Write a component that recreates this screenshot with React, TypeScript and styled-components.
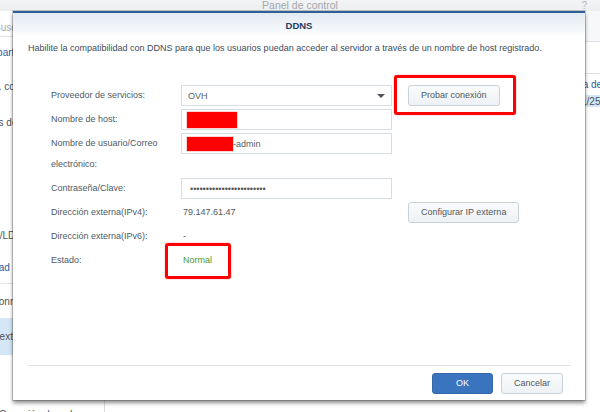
import React from "react";
import styled, { createGlobalStyle } from "styled-components";

const Global = createGlobalStyle`
  html, body { margin: 0; padding: 0; }
  body {
    width: 600px; height: 412px; overflow: hidden;
    font-family: "Liberation Sans", Arial, sans-serif;
    background: #fff;
  }
  #root { width: 600px; height: 412px; position: relative; overflow: hidden; }
  * { box-sizing: border-box; }
`;

/* ---------- background window ---------- */
const Window = styled.div`
  display: flex;
  flex-direction: column;
  width: 600px;
  height: 412px;
  background: #fff;
`;

const TitleBar = styled.div`
  flex: none;
  height: 11px;
  display: grid;
  grid-template-columns: 1fr auto 1fr;
  align-items: center;
  background: linear-gradient(#f3f4f5, #eceef0);
  color: #a3a7ab;
  font-size: 10.5px;
  line-height: 11px;
`;

const TitleText = styled.div`
  grid-column: 2;
  margin-top: -1px;
`;

const Help = styled.div`
  justify-self: end;
  padding-right: 13px;
  color: #b4b8bc;
  font-size: 10px;
`;

const WindowBody = styled.div`
  flex: 1;
  display: flex;
  min-height: 0;
`;

const Sidebar = styled.div`
  width: 105px;
  flex: none;
  border-right: 1px solid #d9dde1;
  display: flex;
  flex-direction: column;
  overflow: hidden;
`;

const SideItem = styled.div<{ $h: number; $color?: string; $indent: number; $active?: boolean; $line?: boolean }>`
  flex: none;
  height: ${(p) => p.$h}px;
  display: flex;
  align-items: center;
  white-space: nowrap;
  font-size: 10px;
  color: ${(p) => p.$color || "#4b535b"};
  background: ${(p) => (p.$active ? "#d5e7f7" : "transparent")};
  border-bottom: ${(p) => (p.$line ? "1px solid #e3e6e9" : "none")};
  & > span { margin-left: ${(p) => p.$indent}px; }
`;

const SearchBox = styled.div`
  flex: none;
  margin-top: 8px;
  height: 18px;
  border-bottom: 1px solid #e1e4e7;
  display: flex;
  align-items: center;
  color: #a5abb1;
  font-size: 10px;
  white-space: nowrap;
  & > span { margin-left: -6px; }
`;

const Main = styled.div`
  flex: 1;
  display: flex;
  flex-direction: column;
  overflow: hidden;
`;

const MainBar = styled.div<{ $h: number; $bg?: string; $line?: boolean; $color?: string }>`
  flex: none;
  height: ${(p) => p.$h}px;
  background: ${(p) => p.$bg || "#fff"};
  border-bottom: ${(p) => (p.$line ? "1px solid #dde1e5" : "none")};
  display: grid;
  grid-template-columns: 451px auto;
  align-items: center;
  white-space: nowrap;
  font-size: 10px;
  color: ${(p) => p.$color || "#4b535b"};
`;

/* ---------- dialog ---------- */
const Dialog = styled.div`
  position: absolute;
  left: 13px;
  top: 11px;
  width: 572px;
  height: 389px;
  background: #fff;
  border-top: 2px solid #2f5f96;
  box-shadow: 0 0 0 1px rgba(0, 0, 0, 0.18), 0 3px 4px rgba(0, 0, 0, 0.45);
  display: flex;
  flex-direction: column;
  font-size: 9px;
`;

const Header = styled.div`
  flex: none;
  height: 23px;
  background: linear-gradient(#e3eaf2, #f8fafc 85%, #fff);
  display: flex;
  align-items: center;
  justify-content: center;
`;

const Title = styled.div`
  font-weight: bold;
  font-size: 9.5px;
  color: #1d3b66;
  margin-top: 2px;
`;

const Body = styled.div`
  flex: 1;
  padding: 6px 15px 0;
  display: flex;
  flex-direction: column;
`;

const Description = styled.div`
  line-height: 12px;
  color: #3d4c5c;
`;

const Form = styled.div`
  margin-top: 31px;
  margin-left: 23px;
  display: grid;
  grid-template-columns: 114px 211px auto;
  column-gap: 16px;
  row-gap: 3px;
  grid-auto-rows: minmax(21px, auto);
  align-items: start;
`;

const Label = styled.div`
  line-height: 21px;
  color: #4e5a66;
`;

const Field = styled.div`
  height: 21px;
  border: 1px solid #d6dde5;
  padding: 0 5px;
  display: flex;
  align-items: center;
  color: #555d65;
  white-space: nowrap;
`;

const SelectField = styled(Field)`
  padding: 0 6px 0 6px;
  justify-content: space-between;
`;

const Caret = styled.span`
  width: 0;
  height: 0;
  border-left: 4px solid transparent;
  border-right: 4px solid transparent;
  border-top: 4px solid #4f565d;
`;

const Redacted = styled.span<{ $w: number; $h: number }>`
  display: inline-block;
  width: ${(p) => p.$w}px;
  height: ${(p) => p.$h}px;
  background: #ff0000;
  box-shadow: 0 0 1px #ff0000;
`;

const Dots = styled.span`
  font-size: 9px;
  color: #555;
  margin-left: 3px;
`;

const Value = styled.div<{ $color?: string }>`
  line-height: 21px;
  padding-left: 2px;
  color: ${(p) => p.$color || "#50575e"};
`;

const Cell = styled.div`
  justify-self: start;
`;

const Button = styled.button<{ $primary?: boolean }>`
  height: 21px;
  min-width: 61px;
  padding: 0 12px;
  border-radius: 3px;
  border: 1px solid ${(p) => (p.$primary ? "#3468ac" : "#c9d1da")};
  background: ${(p) => (p.$primary ? "#3a74bf" : "linear-gradient(#fafbfc, #eef1f5)")};
  color: ${(p) => (p.$primary ? "#fff" : "#50585f")};
  font-family: "Liberation Sans", Arial, sans-serif;
  font-size: 9px;
  line-height: 19px;
  cursor: pointer;
`;

const Annotated = styled.span`
  position: relative;
  display: inline-flex;
`;

const Mark = styled.span<{ $t: number; $l: number; $r: number; $b: number }>`
  position: absolute;
  top: ${(p) => p.$t}px;
  left: ${(p) => p.$l}px;
  right: ${(p) => p.$r}px;
  bottom: ${(p) => p.$b}px;
  border: 3px solid #ff0000;
  border-radius: 3px;
  box-shadow: 0 0 1px #ff0000;
  pointer-events: none;
`;

const Footer = styled.div`
  flex: none;
  margin: 0 14px 0 15px;
  border-top: 1px solid #dfe3e8;
  padding: 7px 8px 6px 0;
  display: flex;
  justify-content: flex-end;
  gap: 8px;
`;

const sideItems = [
  { text: "Compartir", h: 30, color: "#2b5e9c", indent: -24 },
  { text: "Carp. compartida", h: 38, indent: -23 },
  { text: "Servicios de archivos", h: 34, indent: -37 },
  { text: "", h: 80, indent: 0 },
  { text: "Dominio/LDAP", h: 32, indent: -37 },
  { text: "Conectividad", h: 33, color: "#2b5e9c", indent: -48, line: true },
  { text: "QuickConnect", h: 34, indent: -34 },
  { text: "Acceso externo", h: 37, indent: -36, active: true },
  { text: "", h: 47, indent: 0 },
  { text: "Conexión de red", h: 24, indent: -1 },
];

export default function App() {
  return (
    <>
      <Global />
      <Window>
        <TitleBar>
          <TitleText>Panel de control</TitleText>
          <Help>?</Help>
        </TitleBar>
        <WindowBody>
          <Sidebar>
            <SearchBox>
              <span>Buscar</span>
            </SearchBox>
            {sideItems.map((it, i) => (
              <SideItem
                key={i}
                $h={it.h}
                $color={it.color}
                $indent={it.indent}
                $active={it.active}
                $line={it.line}
              >
                <span>{it.text}</span>
              </SideItem>
            ))}
          </Sidebar>
          <Main>
            <MainBar $h={31} $bg="#f7f8fa" $line />
            <MainBar $h={32} $line />
            <MainBar $h={21} $color="#2b5e9c">
              <span />
              <span>Cuenta de dominio</span>
            </MainBar>
            <MainBar $h={12} $bg="#d5e7f7">
              <span />
              <span>2021/1/25</span>
            </MainBar>
          </Main>
        </WindowBody>
      </Window>

      <Dialog>
        <Header>
          <Title>DDNS</Title>
        </Header>
        <Body>
          <Description>
            Habilite la compatibilidad con DDNS para que los usuarios puedan acceder al servidor a través de un nombre de host registrado.
          </Description>
          <Form>
            <Label>Proveedor de servicios:</Label>
            <SelectField>
              <span>OVH</span>
              <Caret />
            </SelectField>
            <Cell>
              <Annotated>
                <Button>Probar conexión</Button>
                <Mark $t={-10} $l={-14} $r={-16} $b={-9} />
              </Annotated>
            </Cell>

            <Label>Nombre de host:</Label>
            <Field>
              <Redacted $w={50} $h={16} />
            </Field>
            <span />

            <Label>Nombre de usuario/Correo electrónico:</Label>
            <Field>
              <Redacted $w={46} $h={14} />
              <span>-admin</span>
            </Field>
            <span />

            <Label>Contraseña/Clave:</Label>
            <Field>
              <Dots>{"•".repeat(24)}</Dots>
            </Field>
            <span />

            <Label>Dirección externa(IPv4):</Label>
            <Value>79.147.61.47</Value>
            <Cell>
              <Button>Configurar IP externa</Button>
            </Cell>

            <Label>Dirección externa(IPv6):</Label>
            <Value>-</Value>
            <span />

            <Label>Estado:</Label>
            <Cell>
              <Annotated>
                <Value $color="#4a9a35">Normal</Value>
                <Mark $t={-7} $l={-16} $r={-19} $b={-8} />
              </Annotated>
            </Cell>
            <span />
          </Form>
        </Body>
        <Footer>
          <Button $primary>OK</Button>
          <Button>Cancelar</Button>
        </Footer>
      </Dialog>
    </>
  );
}
